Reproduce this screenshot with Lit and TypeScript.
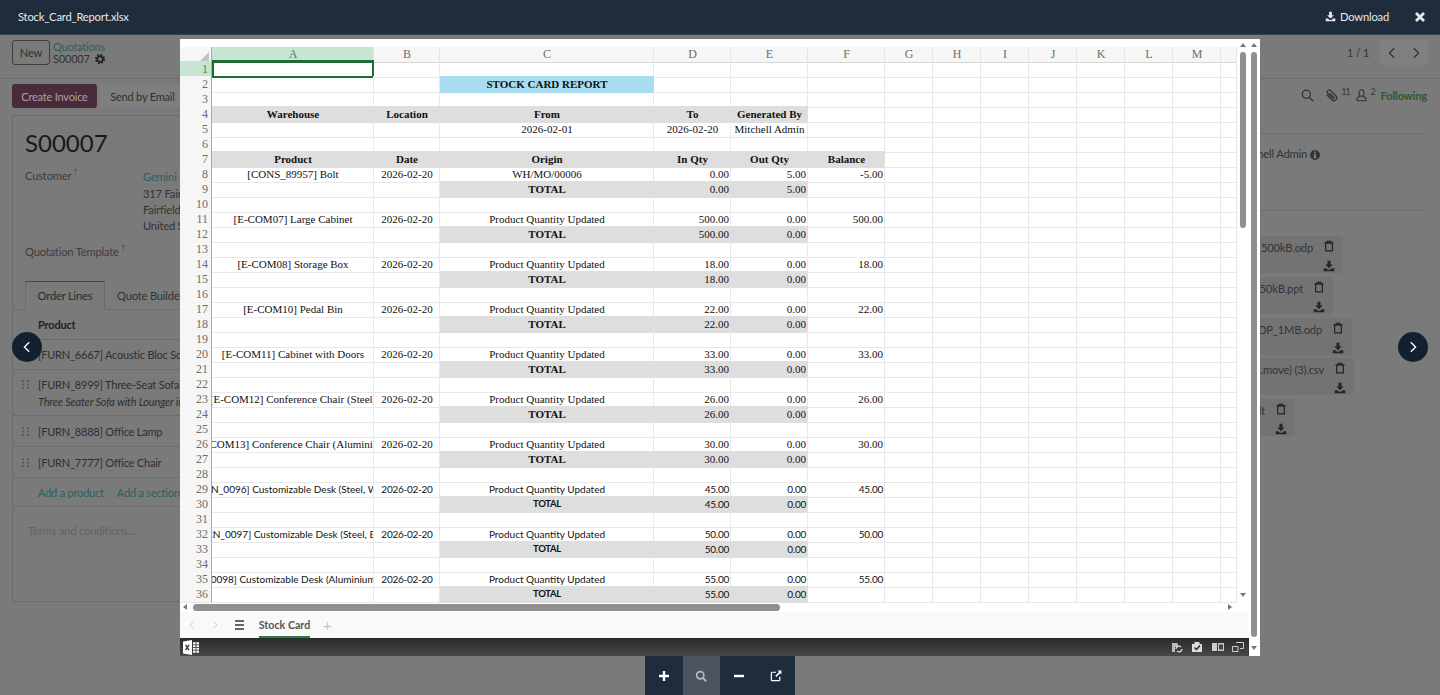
import { LitElement, html, css } from "lit";
import { customElement } from "lit/decorators.js";

const dl = html`<svg viewBox="0 0 16 16" class="ic"><path fill="currentColor" d="M6 1h4v5h3l-5 5-5-5h3zM1 11h3.500l2 2h3l2-2H15v4H1z"/></svg>`;
const trash = html`<svg viewBox="0 0 16 16" class="ic"><path fill="none" stroke="currentColor" stroke-width="1.700" d="M2 4h12M5.500 4V1.800h5V4M3.500 4v10.500h9V4"/></svg>`;
const chevL = html`<svg viewBox="0 0 16 16" class="chev"><path fill="none" stroke="currentColor" stroke-width="1.500" d="M10.500 2.500 5 8l5.500 5.500"/></svg>`;
const chevR = html`<svg viewBox="0 0 16 16" class="chev"><path fill="none" stroke="currentColor" stroke-width="1.500" d="M5.500 2.500 11 8l-5.500 5.500"/></svg>`;

const COLS = ["A", "B", "C", "D", "E", "F", "G", "H", "I", "J", "K", "L", "M", ""];

type Prod = { row: number; name: string; inq: string; out: string; bal: string; origin: string };
const PRODS: Prod[] = [
  { row: 8, name: "[CONS_89957] Bolt", origin: "WH/MO/00006", inq: "0.00", out: "5.00", bal: "-5.00" },
  { row: 11, name: "[E-COM07] Large Cabinet", origin: "Product Quantity Updated", inq: "500.00", out: "0.00", bal: "500.00" },
  { row: 14, name: "[E-COM08] Storage Box", origin: "Product Quantity Updated", inq: "18.00", out: "0.00", bal: "18.00" },
  { row: 17, name: "[E-COM10] Pedal Bin", origin: "Product Quantity Updated", inq: "22.00", out: "0.00", bal: "22.00" },
  { row: 20, name: "[E-COM11] Cabinet with Doors", origin: "Product Quantity Updated", inq: "33.00", out: "0.00", bal: "33.00" },
  { row: 23, name: "[E-COM12] Conference Chair (Steel)", origin: "Product Quantity Updated", inq: "26.00", out: "0.00", bal: "26.00" },
  { row: 26, name: "[E-COM13] Conference Chair (Aluminium)", origin: "Product Quantity Updated", inq: "30.00", out: "0.00", bal: "30.00" },
  { row: 29, name: "[FURN_0096] Customizable Desk (Steel, White)", origin: "Product Quantity Updated", inq: "45.00", out: "0.00", bal: "45.00" },
  { row: 32, name: "[FURN_0097] Customizable Desk (Steel, Black)", origin: "Product Quantity Updated", inq: "50.00", out: "0.00", bal: "50.00" },
  { row: 35, name: "[FURN_0098] Customizable Desk (Aluminium, White)", origin: "Product Quantity Updated", inq: "55.00", out: "0.00", bal: "55.00" },
];

type Cell = { t?: string; c?: string };
function rowCells(n: number): Record<number, Cell> {
  const r: Record<number, Cell> = {};
  if (n === 2) r[2] = { t: "STOCK CARD REPORT", c: "blue b" };
  if (n === 4) ["Warehouse", "Location", "From", "To", "Generated By"].forEach((t, i) => (r[i] = { t, c: "gray b" }));
  if (n === 5) {
    r[2] = { t: "2026-02-01" };
    r[3] = { t: "2026-02-20" };
    r[4] = { t: "Mitchell Admin" };
  }
  if (n === 7) ["Product", "Date", "Origin", "In Qty", "Out Qty", "Balance"].forEach((t, i) => (r[i] = { t, c: "gray b" }));
  for (const p of PRODS) {
    const sans = p.row >= 29;
    const f = sans ? " sans" : "";
    const d = sans ? " dg" : "";
    if (n === p.row) {
      r[0] = { t: p.name, c: f };
      r[1] = { t: "2026-02-20", c: f + d };
      r[2] = { t: p.origin, c: f };
      r[3] = { t: p.inq, c: "num" + f + d };
      r[4] = { t: p.out, c: "num" + f + d };
      r[5] = { t: p.bal, c: "num" + f + d };
    }
    if (n === p.row + 1) {
      r[2] = { t: "TOTAL", c: "gray b" + f + (sans ? " tot" : "") };
      r[3] = { t: p.inq, c: "gray num" + f + d };
      r[4] = { t: p.out, c: "gray num" + f + d };
    }
  }
  return r;
}

const CARDS = [
  { name: "file_example_ODP_500kB.odp", w: 343 },
  { name: "file_example_PPT_250kB.ppt", w: 333 },
  { name: "file_example_ODP_1MB.odp", w: 352 },
  { name: "Stock Move (stock.move) (3).csv", w: 354 },
  { name: "default", w: 295 },
];

@customElement("app-root")
export class AppRoot extends LitElement {
  static styles = css`
    :host { display: block; position: relative; width: 1440px; height: 695px; overflow: hidden; background: #7a7a7a; font-family: Lato, sans-serif; font-size: 11.200px; letter-spacing: -0.2px; color: #333; }
    * { box-sizing: border-box; }
    .ic { width: 12px; height: 12px; display: block; flex: none; }
    .chev { width: 14px; height: 14px; display: block; }
    .topbar { height: 35px; background: #1f2c3c; color: #e6e8ea; display: flex; align-items: center; padding: 0 15px 1px 18px; font-size: 11.200px; border-bottom: 1px solid #39434f; }
    .topbar .name { flex: 1; }
    .topbar .dl { display: flex; align-items: center; gap: 4px; margin-right: 26px; }
    .topbar .dl .ic { width: 11px; height: 11px; }
    .close { width: 10px; height: 10px; }
    .cp { height: 44px; border-bottom: 1px solid #6c6c6c; display: flex; align-items: center; padding: 0 12px 8px; gap: 3px; }
    .new { width: 38px; height: 25px; border: 1px solid #3e3e3e; border-radius: 3px; display: flex; align-items: center; justify-content: center; color: #2f2f2f; }
    .crumb { display: flex; flex-direction: column; font-size: 11px; line-height: 12px; }
    .crumb .q { color: #2c6059; }
    .crumb .s { display: flex; align-items: center; gap: 5px; color: #333; }
    .gear { width: 10px; height: 10px; color: #222; }
    .spacer { flex: 1; }
    .pager { color: #333; margin-right: 8px; font-size: 10.800px; }
    .pbtns { width: 48px; height: 25px; background: #808080; border-radius: 3px; display: flex; align-items: center; justify-content: space-around; color: #333; }
    .main { display: flex; }
    .formcol { width: 1000px; padding: 5px 0 0 12px; flex: none; }
    .actions { height: 24px; display: flex; align-items: center; gap: 3px; font-size: 11px; }
    .primary { width: 85px; height: 24px; background: #4a2b3c; color: #a9a2a6; border-radius: 3px; display: flex; align-items: center; justify-content: center; }
    .second { width: 85px; height: 24px; background: #7f7f7f; border-radius: 3px; display: flex; align-items: center; justify-content: center; color: #303030; }
    .sheet { margin-top: 7px; height: 487px; border: 1px solid #6c6c6c; padding-left: 12px; width: 960px; }
    .title { font-size: 24px; letter-spacing: 0; line-height: 32px; margin-top: 11px; color: #181818; height: 32px; }
    .fields { display: grid; grid-template-columns: 118px 1fr; margin-top: 9px; line-height: 16px; }
    .lbl { color: #3d3d3d; }
    sup { font-size: 7px; line-height: 0; color: #3d3d3d; }
    .teal { color: #2c6059; margin: 1px 0 1px; }
    .tpl { margin-top: 10px; line-height: 16px; color: #3d3d3d; }
    .tabs { margin: 21px 0 0 -12px; padding-left: 12px; height: 29px; border-bottom: 1px solid #6c6c6c; display: flex; }
    .tab { height: 29px; width: 80px; border: 1px solid #6c6c6c; border-top-color: #454545; border-bottom-color: #7a7a7a; display: flex; align-items: center; justify-content: center; color: #2b2b2b; }
    .tab.off { border: 0; width: auto; padding-left: 12px; color: #333; }
    .lines { margin-left: -12px; font-size: 11px; }
    .line { border-bottom: 1px solid #6c6c6c; display: flex; align-items: center; padding-left: 9px; gap: 9px; color: #2f2f2f; }
    .line.h30 { height: 30px; }
    .line.h31 { height: 31px; }
    .line.h46 { height: 46px; align-items: flex-start; padding-top: 6px; }
    .line.h46 .handle { margin-top: 4px; }
    .line.h29 { height: 29px; padding-left: 25px; gap: 5px; }
    .handle { width: 7px; height: 9px; flex: none; color: #5c5c5c; }
    .ph { width: 7px; flex: none; }
    .two { display: flex; flex-direction: column; line-height: 17px; }
    .two i { color: #2f2f2f; }
    .add { color: #2c6059; margin-right: 8px; }
    .bold { font-weight: 700; color: #222; }
    .terms { margin: 16px 0 0 3px; color: #626262; line-height: 16px; }
    .chatter { flex: 1; padding-right: 13px; padding-top: 4px; }
    .ctop { height: 24px; margin-bottom: 26px; display: flex; align-items: center; justify-content: flex-end; gap: 6px; color: #333; font-size: 9px; }
    .ctop .ic { width: 13px; height: 13px; }
    .ctop .search { margin-right: 5px; }
    .ctop .sup { margin: -8px -1px 0 -3px; }
    .ctop .tight { letter-spacing: -1px; }
    .follow { font-size: 11.200px; font-weight: 700; color: #2d5a2d; }
    .chline { border-top: 1px solid #6c6c6c; }
    .who { height: 76px; display: flex; justify-content: flex-end; gap: 3px; padding: 12px 107px 0 0; line-height: 16px; }
    .who .ic { width: 10px; height: 10px; margin-top: 4px; }
    .cards { margin-top: 25px; display: flex; flex-direction: column; gap: 3.750px; }
    .card { height: 37px; background: #737373; border-radius: 3px; display: grid; grid-template-columns: 1fr 14px; column-gap: 9px; padding: 4px 7px 0 0; overflow: hidden; }
    .card .fn { display: flex; justify-content: flex-end; white-space: nowrap; overflow: hidden; line-height: 15px; color: #333; }
    .card .ic { width: 12px; height: 12px; color: #252525; margin: 0 auto 4px; }
    .card .dlc { grid-column: 2; margin-top: 4px; }

    .viewer { position: absolute; left: 180px; top: 39px; width: 1080px; height: 617px; background: #fff; display: flex; letter-spacing: 0; }
    .vleft { width: 1069px; display: flex; flex-direction: column; }
    .outer { width: 11px; position: relative; }
    .upper { display: flex; height: 562px; }
    .grid { width: 1057px; padding-top: 8px; font-family: "Liberation Serif", serif; font-size: 11px; color: #111; }
    .r { display: grid; grid-template-columns: 32px 162px 66px 214px 77px 77px 77px repeat(7, 48px) 16px; height: 15px; }
    .r.head { height: 14px; }
    .rh { color: #6d6d6d; font-size: 12px; display: flex; align-items: center; justify-content: flex-end; padding: 1px 3px 0 0; background: #f6f6f6; border-right: 1px solid #aaa; border-bottom: 1px solid #e6e6e6; }
    .rh.on { background: #c7e6d2; color: #3f8a5c; }
    .ch { color: #6d6d6d; font-size: 12px; display: flex; align-items: center; justify-content: center; padding-left: 1px; background: #f6f6f6; border-right: 1px solid #e4e4e4; border-bottom: 1px solid #d6d6d6; }
    .ch.on { background: #c7e6d2; color: #3f8a5c; border-bottom-color: #c7e6d2; }
    .corner { background: #f6f6f6; border-right: 1px solid #aaa; border-bottom: 1px solid #d6d6d6; display: flex; justify-content: flex-end; align-items: flex-end; padding: 0 2px 1px 0; }
    .tri { width: 0; height: 0; border-left: 9px solid transparent; border-bottom: 9px solid #c3c3c3; }
    .c { border-right: 1px solid #e9e9e9; border-bottom: 1px solid #e9e9e9; display: flex; align-items: center; justify-content: center; padding-left: 1px; white-space: nowrap; overflow: hidden; line-height: 14px; }
    .c.b { font-weight: 700; }
    .c.gray { background: #dedede; border-color: #dedede; }
    .c.blue { background: #a8dcf0; border-color: #a8dcf0; }
    .c.num { justify-content: flex-end; padding: 0 1px 0 0; }
    .c.sans { font-family: Lato, sans-serif; font-size: 10px; }
    .c.dg { letter-spacing: -0.25px; }
    .c.tot { font-size: 9.500px; letter-spacing: -0.3px; }
    .c.sel { border: 2px solid #1f6b35; box-shadow: 0 -1px 0 #1f6b35; }
    .vs { width: 12px; position: relative; }
    .thumb { position: absolute; background: #8f8f8f; border-radius: 3px; }
    .t1 { left: 3px; width: 6px; top: 13px; height: 176px; }
    .t2 { left: 2px; width: 6px; top: 13px; height: 585px; }
    .au { position: absolute; width: 0; height: 0; border-left: 3.500px solid transparent; border-right: 3.500px solid transparent; border-bottom: 4px solid #777; }
    .ad { position: absolute; width: 0; height: 0; border-left: 3.500px solid transparent; border-right: 3.500px solid transparent; border-top: 4px solid #777; }
    .a1 { left: 2.500px; top: 4px; }
    .a2 { left: 2.500px; top: 554px; }
    .a3 { left: 1.500px; top: 4px; }
    .a4 { left: 1.500px; top: 607px; }
    .hs { height: 11px; position: relative; }
    .h-thumb { position: absolute; left: 13px; top: 3px; width: 587px; height: 7px; border-radius: 4px; background: #8f8f8f; }
    .al { position: absolute; left: 3px; top: 3px; border-top: 3.500px solid transparent; border-bottom: 3.500px solid transparent; border-right: 4px solid #777; }
    .ar { position: absolute; left: 1048px; top: 3px; border-top: 3.500px solid transparent; border-bottom: 3.500px solid transparent; border-left: 4px solid #777; }
    .tabsbar { height: 26px; background: #f9f9f9; display: flex; align-items: stretch; padding-left: 7px; font-family: Lato, sans-serif; color: #c8c8c8; }
    .nav { width: 23px; display: flex; align-items: center; }
    .nav .chev { width: 10px; height: 10px; }
    .burger { width: 14px; margin: 0 0 0 2px; display: flex; flex-direction: column; justify-content: center; gap: 2px; }
    .burger span { display: block; height: 2px; width: 9px; background: #666; }
    .stab { margin-left: 10px; width: 51px; font-size: 10.700px; font-weight: 700; color: #555; display: flex; align-items: center; justify-content: center; border-bottom: 2px solid #2d7a4c; white-space: nowrap; }
    .plus { margin-left: 13px; font-size: 15px; display: flex; align-items: center; color: #c4c4c4; }
    .status { height: 18px; background: linear-gradient(#2b2b2b, #474747); display: flex; align-items: center; padding: 0 5px 0 3px; color: #ddd; }
    .status .xl { width: 16px; height: 15px; flex: none; }
    .status .sp { flex: 1; }
    .status .si { width: 12px; height: 12px; margin-left: 8.500px; display: block; }

    .toolbar { position: absolute; left: 645px; top: 656px; width: 150px; height: 39px; background: #1f2c3c; display: flex; color: #fff; }
    .tb { flex: 1; display: flex; align-items: center; justify-content: center; }
    .tb.mid { background: #4b545f; color: #b6babe; }
    .tb .ic { width: 12px; height: 12px; }
    .round { position: absolute; top: 332px; width: 30px; height: 30px; border-radius: 50%; background: #13202f; color: #fff; display: flex; align-items: center; justify-content: center; }
    .round.l { left: 12px; }
    .round.r2 { left: 1398px; }
  `;

  private handle() {
    return html`<svg class="handle" viewBox="0 0 7 9"><path fill="currentColor" d="M0 0h2v2H0zM5 0h2v2H5zM0 3.500h2v2H0zM5 3.500h2v2H5zM0 7h2v2H0zM5 7h2v2H5z"/></svg>`;
  }

  private renderRows() {
    const out = [];
    for (let n = 1; n <= 36; n++) {
      const cells = rowCells(n);
      out.push(html`<div class="r">
        <div class="rh ${n === 1 ? "on" : ""}">${n}</div>
        ${COLS.map((_, i) => {
          const cell = cells[i];
          const sel = n === 1 && i === 0 ? "sel" : "";
          return html`<div class="c ${cell?.c ?? ""} ${sel}"><span>${cell?.t ?? ""}</span></div>`;
        })}
      </div>`);
    }
    return out;
  }

  render() {
    return html`
      <div class="topbar">
        <div class="name">Stock_Card_Report.xlsx</div>
        <div class="dl">${dl}<span>Download</span></div>
        <svg class="close" viewBox="0 0 10 10"><path stroke="currentColor" stroke-width="2.800" d="M1 1l8 8M9 1l-8 8"/></svg>
      </div>
      <div class="cp">
        <div class="new">New</div>
        <div class="crumb">
          <span class="q">Quotations</span>
          <span class="s">S00007
            <svg class="gear" viewBox="0 0 16 16"><circle cx="8" cy="8" r="4.300" fill="none" stroke="currentColor" stroke-width="2.600"/><circle cx="8" cy="8" r="6.500" fill="none" stroke="currentColor" stroke-width="3" stroke-dasharray="3 2.100"/></svg>
          </span>
        </div>
        <div class="spacer"></div>
        <div class="pager">1 / 1</div>
        <div class="pbtns">${chevL}${chevR}</div>
      </div>
      <div class="main">
        <div class="formcol">
          <div class="actions">
            <div class="primary">Create Invoice</div>
            <div class="second">Send by Email</div>
          </div>
          <div class="sheet">
            <div class="title">S00007</div>
            <div class="fields">
              <div class="lbl">Customer <sup>?</sup></div>
              <div>
                <div class="teal">Gemini Furniture</div>
                <div>317 Fairchild Dr</div>
                <div>Fairfield CA 94535</div>
                <div>United States</div>
              </div>
            </div>
            <div class="tpl">Quotation Template <sup>?</sup></div>
            <div class="tabs">
              <div class="tab">Order Lines</div>
              <div class="tab off">Quote Builder</div>
            </div>
            <div class="lines">
              <div class="line h30"><span class="ph"></span><span class="bold">Product</span></div>
              <div class="line h30">${this.handle()}<span>[FURN_6667] Acoustic Bloc Screens</span></div>
              <div class="line h46">${this.handle()}<div class="two"><span>[FURN_8999] Three-Seat Sofa</span><i>Three Seater Sofa with Lounger in Steel Grey Colour</i></div></div>
              <div class="line h31">${this.handle()}<span>[FURN_8888] Office Lamp</span></div>
              <div class="line h31">${this.handle()}<span>[FURN_7777] Office Chair</span></div>
              <div class="line h29"><span class="add">Add a product</span><span class="add">Add a section</span></div>
            </div>
            <div class="terms">Terms and conditions...</div>
          </div>
        </div>
        <div class="chatter">
          <div class="ctop">
            <svg class="ic search" viewBox="0 0 16 16"><circle cx="6.500" cy="6.500" r="5" fill="none" stroke="currentColor" stroke-width="1.600"/><path stroke="currentColor" stroke-width="1.800" d="M10.200 10.200 15 15"/></svg>
            <svg class="ic" viewBox="0 0 16 16"><path fill="none" stroke="currentColor" stroke-width="1.500" stroke-linecap="round" transform="rotate(-45 8 8)" d="M4.500 4v8a3.500 3.500 0 0 0 7 0V3a2.500 2.500 0 0 0-5 0v8.500a1 1 0 0 0 2 0V5"/></svg>
            <span class="sup tight">11</span>
            <svg class="ic" viewBox="0 0 16 16"><path fill="none" stroke="currentColor" stroke-width="1.300" d="M5 4.500a3 3.500 0 0 1 6 0v1a3 3.500 0 0 1-6 0zM6 9 2.500 11v3.500h11V11L10 9"/></svg>
            <span class="sup">2</span>
            <span class="follow">Following</span>
          </div>
          <div class="chline"></div>
          <div class="who"><span>Mitchell Admin</span>
            <svg class="ic" viewBox="0 0 16 16"><path fill="#333" fill-rule="evenodd" d="M8 0a8 8 0 1 1 0 16A8 8 0 0 1 8 0zM6.500 2.500v2.500h3V2.500zM5.500 6.500V8h1v3.500h-1V13h5v-1.500h-1v-5z"/></svg>
          </div>
          <div class="chline"></div>
          <div class="cards">
            ${CARDS.map(
              (c) => html`<div class="card" style="width:${c.w}px">
                <div class="fn"><span>${c.name}</span></div>
                ${trash}
                <div class="dlc">${dl}</div>
              </div>`
            )}
          </div>
        </div>
      </div>

      <div class="viewer">
        <div class="vleft">
          <div class="upper">
            <div class="grid">
              <div class="r head">
                <div class="corner"><div class="tri"></div></div>
                ${COLS.map((l, i) => html`<div class="ch ${i === 0 ? "on" : ""}">${l}</div>`)}
              </div>
              ${this.renderRows()}
            </div>
            <div class="vs">
              <div class="au a1"></div>
              <div class="thumb t1"></div>
              <div class="ad a2"></div>
            </div>
          </div>
          <div class="hs">
            <div class="al"></div>
            <div class="h-thumb"></div>
            <div class="ar"></div>
          </div>
          <div class="tabsbar">
            <div class="nav">${chevL}</div>
            <div class="nav">${chevR}</div>
            <div class="burger"><span></span><span></span><span></span></div>
            <div class="stab">Stock Card</div>
            <div class="plus">+</div>
          </div>
          <div class="status">
            <svg class="xl" viewBox="0 0 16 14" preserveAspectRatio="none"><path fill="#fff" d="M0 1.500 9 0v14L0 12.500zM10 2h6v10h-6z"/><path stroke="#333" stroke-width="1.300" d="M2.500 4.500l3.500 5M6 4.500l-3.500 5"/><path stroke="#333" stroke-width=".8" d="M10 4.500h6M10 7h6M10 9.500h6M13 2v10"/></svg>
            <span class="sp"></span>
            <svg class="si" viewBox="0 0 12 12"><path fill="#bbb" d="M1 2h5l1 1v3H4v5H1z"/><path fill="none" stroke="#ddd" stroke-width="1.300" d="M5 8a3 3 0 0 1 5-2M11 8a3 3 0 0 1-5 2"/></svg>
            <svg class="si" viewBox="0 0 12 12"><path fill="#ddd" d="M1 3h10v8H1zM3.500 1h5v2h-5z"/><path fill="none" stroke="#222" stroke-width="1.400" d="M3.500 6.500 5.500 8.500 9 4.500"/></svg>
            <svg class="si" viewBox="0 0 12 12"><path fill="#ccc" d="M0 2h5v8H0zM6 2h6v8H6z"/><path fill="#444" d="M7 3.500h4v5H7z"/></svg>
            <svg class="si" viewBox="0 0 12 12"><path fill="none" stroke="#ccc" d="M4 1.500h7.500v6H8M.5 5.500h5.500v5H.5z"/></svg>
          </div>
        </div>
        <div class="outer">
          <div class="au a3"></div>
          <div class="thumb t2"></div>
          <div class="ad a4"></div>
        </div>
      </div>

      <div class="toolbar">
        <div class="tb"><svg class="ic" viewBox="0 0 12 12"><path stroke="currentColor" stroke-width="2.400" d="M6 1v10M1 6h10"/></svg></div>
        <div class="tb mid"><svg class="ic" viewBox="0 0 16 16"><circle cx="7" cy="7" r="4.800" fill="none" stroke="currentColor" stroke-width="2.200"/><path stroke="currentColor" stroke-width="2.400" d="M10.500 10.500 15 15"/></svg></div>
        <div class="tb"><svg class="ic" viewBox="0 0 12 12"><path stroke="currentColor" stroke-width="2.400" d="M1 6h10"/></svg></div>
        <div class="tb"><svg class="ic" viewBox="0 0 16 16"><path fill="none" stroke="currentColor" stroke-width="1.600" d="M13 9v4.200a1 1 0 0 1-1 1H2.800a1 1 0 0 1-1-1V4a1 1 0 0 1 1-1H8"/><path fill="currentColor" d="M10 .8h5.200V6l-1.800-1.800-5 5-1.400-1.400 5-5z"/></svg></div>
      </div>
      <div class="round l">${chevL}</div>
      <div class="round r2">${chevR}</div>
    `;
  }
}
